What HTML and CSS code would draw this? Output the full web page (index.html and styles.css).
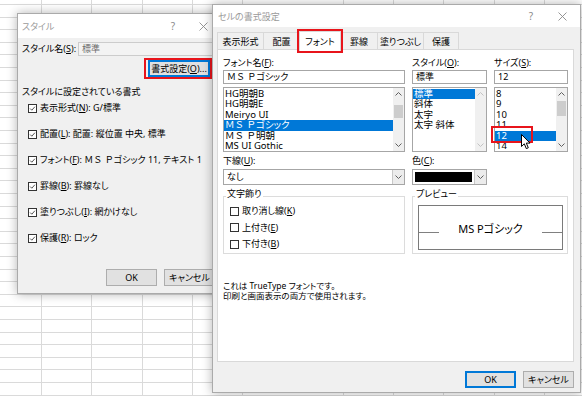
FILE: index.html
```html
<!DOCTYPE html>
<html lang="ja">
<head>
<meta charset="utf-8">
<title>スタイル</title>
<link rel="stylesheet" href="styles.css">
</head>
<body>
<section class="dlg dlg-style">
  <header class="titlebar">
    <span class="title">スタイル</span>
    <span class="help">?</span>
    <span class="close"><svg viewBox="0 0 9 9"><path d="M0.5 0.5L8.5 8.5M8.5 0.5L0.5 8.5"/></svg></span>
  </header>
  <div class="body1">
    <div class="name-row">
      <span class="name-lbl">スタイル名(<u>S</u>):</span>
      <div class="tb tb-off">標準</div>
    </div>
    <div class="mark fmt-mark"><button class="btn btn-def fmt-btn">書式設定(<u>O</u>)...</button></div>
    <div class="section">スタイルに設定されている書式</div>
    <ul class="checks">
      <li><span class="cb"><svg viewBox="0 0 9 9"><polyline points="1.5,4.6 3.6,6.7 7.6,2.2"/></svg></span><span>表示形式(<u>N</u>): G/標準</span></li>
      <li><span class="cb"><svg viewBox="0 0 9 9"><polyline points="1.5,4.6 3.6,6.7 7.6,2.2"/></svg></span><span>配置(<u>L</u>): 配置: 縦位置 中央, 標準</span></li>
      <li><span class="cb"><svg viewBox="0 0 9 9"><polyline points="1.5,4.6 3.6,6.7 7.6,2.2"/></svg></span><span>フォント(<u>F</u>): <span class="fw">ＭＳ Ｐ</span>ゴシック 11, テキスト 1</span></li>
      <li><span class="cb"><svg viewBox="0 0 9 9"><polyline points="1.5,4.6 3.6,6.7 7.6,2.2"/></svg></span><span>罫線(<u>B</u>): 罫線なし</span></li>
      <li><span class="cb"><svg viewBox="0 0 9 9"><polyline points="1.5,4.6 3.6,6.7 7.6,2.2"/></svg></span><span>塗りつぶし(<u>I</u>): 網かけなし</span></li>
      <li><span class="cb"><svg viewBox="0 0 9 9"><polyline points="1.5,4.6 3.6,6.7 7.6,2.2"/></svg></span><span>保護(<u>R</u>): ロック</span></li>
    </ul>
    <div class="btns1">
      <button class="btn">OK</button>
      <button class="btn">キャンセル</button>
    </div>
  </div>
</section>

<section class="dlg dlg-cell">
  <header class="titlebar">
    <span class="title">セルの書式設定</span>
    <span class="help">?</span>
    <span class="close"><svg viewBox="0 0 9 9"><path d="M0.5 0.5L8.5 8.5M8.5 0.5L0.5 8.5"/></svg></span>
  </header>
  <nav class="tabs">
    <span class="tab t1">表示形式</span>
    <span class="tab t2">配置</span>
    <span class="tab t3 active">フォント</span>
    <span class="tab t4">罫線</span>
    <span class="tab t5">塗りつぶし</span>
    <span class="tab t6">保護</span>
  </nav>
  <div class="panel">
    <div class="lbl">フォント名(<u>F</u>):</div>
    <div class="lbl">スタイル(<u>O</u>):</div>
    <div class="lbl">サイズ(<u>S</u>):</div>

    <div class="tb"><span class="fw">ＭＳ Ｐ</span>ゴシック</div>
    <div class="tb">標準</div>
    <div class="tb">12</div>

    <div class="list">
      <ul class="items">
        <li>HG明朝B</li>
        <li>HG明朝E</li>
        <li>Meiryo UI</li>
        <li class="sel"><span class="fw">ＭＳ Ｐ</span>ゴシック</li>
        <li><span class="fw">ＭＳ Ｐ</span>明朝</li>
        <li>MS UI Gothic</li>
      </ul>
      <div class="sb">
        <span class="arr"><svg viewBox="0 0 7 4"><polyline points="0.5,3.5 3.5,0.5 6.5,3.5"/></svg></span>
        <span class="track"><span class="thumb th-font"></span></span>
        <span class="arr"><svg viewBox="0 0 7 4"><polyline points="0.5,0.5 3.5,3.5 6.5,0.5"/></svg></span>
      </div>
    </div>
    <div class="list">
      <ul class="items">
        <li class="sel">標準</li>
        <li>斜体</li>
        <li>太字</li>
        <li>太字 斜体</li>
      </ul>
      <div class="sb sb-off">
        <span class="arr"><svg viewBox="0 0 7 4"><polyline points="0.5,3.5 3.5,0.5 6.5,3.5"/></svg></span>
        <span class="track"></span>
        <span class="arr"><svg viewBox="0 0 7 4"><polyline points="0.5,0.5 3.5,3.5 6.5,0.5"/></svg></span>
      </div>
    </div>
    <div class="list size-list">
      <ul class="items">
        <li>8</li>
        <li>9</li>
        <li>10</li>
        <li>11</li>
        <li class="sel">12</li>
        <li>14</li>
      </ul>
      <div class="sb">
        <span class="arr"><svg viewBox="0 0 7 4"><polyline points="0.5,3.5 3.5,0.5 6.5,3.5"/></svg></span>
        <span class="track"><span class="thumb th-size"></span></span>
        <span class="arr"><svg viewBox="0 0 7 4"><polyline points="0.5,0.5 3.5,3.5 6.5,0.5"/></svg></span>
      </div>
      <span class="mark size-mark"></span>
      <svg class="cursor" viewBox="0 0 10 16"><path d="M0.5 0.5L0.5 12.5L3.3 9.8L5.3 14.6L7.3 13.8L5.3 9.1L9 9.1Z"/></svg>
    </div>

    <div class="lbl">下線(<u>U</u>):</div>
    <div class="lbl span2">色(<u>C</u>):</div>

    <div class="combo">
      <span class="combo-val">なし</span>
      <span class="combo-btn"><svg viewBox="0 0 7 4"><polyline points="0.5,0.5 3.5,3.5 6.5,0.5"/></svg></span>
    </div>
    <div class="combo color-combo">
      <span class="swatch"></span>
      <span class="combo-btn"><svg viewBox="0 0 7 4"><polyline points="0.5,0.5 3.5,3.5 6.5,0.5"/></svg></span>
    </div>
    <div class="spacer"></div>

    <div class="group">
      <div class="glabel">文字飾り</div>
      <ul class="gchecks">
        <li><span class="cb cb-off"></span><span>取り消し線(<u>K</u>)</span></li>
        <li><span class="cb cb-off"></span><span>上付き(<u>E</u>)</span></li>
        <li><span class="cb cb-off"></span><span>下付き(<u>B</u>)</span></li>
      </ul>
    </div>
    <div class="group span2">
      <div class="glabel">プレビュー</div>
      <div class="preview">
        <span class="pline"></span>
        <span class="ptext">MS Pゴシック</span>
        <span class="pline"></span>
      </div>
    </div>

    <p class="desc">これは TrueType フォントです。<br>印刷と画面表示の両方で使用されます。</p>
  </div>
  <footer class="btns2">
    <button class="btn btn-def">OK</button>
    <button class="btn">キャンセル</button>
  </footer>
</section>
</body>
</html>
```

FILE: styles.css
```css
* { box-sizing: border-box; margin: 0; padding: 0; }

html, body { width: 582px; height: 396px; overflow: hidden; }

body {
  position: relative;
  font-family: "Noto Sans", "Noto Sans CJK JP", sans-serif;
  font-size: 9px;
  color: #000;
  font-feature-settings: "palt";
  background:
    repeating-linear-gradient(to right, transparent 0 41px, #dadada 41px 42px, transparent 42px 50.3px),
    repeating-linear-gradient(to bottom, transparent 0 4px, #dadada 4px 5px, transparent 5px 12.6px),
    #fff;
}

ul { list-style: none; }
u { text-decoration-thickness: 1px; text-underline-offset: 1px; }
.fw { font-feature-settings: normal; }

/* ---------- dialogs (windows on the desktop) ---------- */
.dlg {
  position: absolute;
  display: flex;
  flex-direction: column;
  background: #f0f0f0;
  border: 1px solid #aaaaaa;
  box-shadow: 0 0 10px rgba(0, 0, 0, 0.3);
}
.dlg-style { left: 17px; top: 13px; width: 206px; height: 281px; }
.dlg-cell  { left: 212px; top: 4px; width: 369px; height: 389px; }

.titlebar {
  flex: none;
  display: flex;
  align-items: center;
  background: #fff;
  color: #9a9a9a;
}
.dlg-style .titlebar { height: 24px; padding: 0 4px 0 4px; }
.dlg-cell .titlebar { height: 22px; padding: 0 3px 0 5px; }
.title { flex: 1; font-size: 9px; }
.help { width: 30px; text-align: center; font-size: 10px; color: #8a8a8a; }
.dlg-cell .help { width: 32px; }
.close { width: 30px; display: flex; justify-content: center; }
.close svg { width: 9px; height: 9px; fill: none; stroke: #8a8a8a; stroke-width: 0.9; }

/* ---------- buttons ---------- */
.btn {
  width: 51px;
  height: 17px;
  font: inherit;
  font-size: 9px;
  color: #000;
  background: #e1e1e1;
  border: 1px solid #adadad;
  line-height: 15px;
  padding: 0;
}
.btn-def { border: 1px solid #0078d7; box-shadow: inset 0 0 0 1px #0078d7; }

.mark { border: 2px solid #e8141b; }

/* ---------- text boxes ---------- */
.tb {
  height: 14px;
  border: 1px solid #a6a6a6;
  background: #fff;
  padding-left: 3px;
  line-height: 12px;
  white-space: nowrap;
  overflow: hidden;
}
.tb-off { background: #f3f3f3; border-color: #cccccc; color: #6d6d6d; }

/* ---------- checkboxes ---------- */
.cb {
  flex: none;
  width: 9px;
  height: 9px;
  border: 1px solid #333;
  background: #fff;
  display: flex;
  align-items: center;
  justify-content: center;
}
.cb svg { width: 9px; height: 9px; fill: none; stroke: #222; stroke-width: 1; }
.cb-off { border-color: #333; }

/* ---------- style dialog body ---------- */
.body1 {
  flex: 1;
  display: flex;
  flex-direction: column;
  padding-left: 4px;
}
.name-row { display: flex; align-items: center; margin-top: 4px; height: 14px; }
.name-lbl { width: 56px; flex: none; line-height: 12px; white-space: nowrap; }
.name-row .tb { flex: 1; }

.fmt-mark {
  align-self: flex-start;
  margin: 2px 0 0 122px;
  width: 68px;
  height: 21px;
  padding: 0 0 0 2px;
  display: flex;
  align-items: center;
}
.fmt-btn { width: 62px; height: 17px; white-space: nowrap; }

.section { margin-top: 7px; line-height: 12px; }

.checks {
  margin: 4px 0 0 6px;
  display: flex;
  flex-direction: column;
  gap: 14px;
}
.checks li, .gchecks li {
  display: flex;
  align-items: center;
  gap: 3px;
  height: 12px;
  line-height: 12px;
  white-space: nowrap;
}

.btns1 { display: flex; gap: 7px; margin: 25px 0 0 84px; }

/* ---------- cell format dialog ---------- */
.tabs {
  flex: none;
  display: flex;
  align-items: flex-end;
  height: 20px;
  margin-top: 2px;
  padding-left: 4px;
}
.tab {
  height: 17px;
  border: 1px solid #d9d9d9;
  border-bottom: none;
  margin-right: -1px;
  background: #f0f0f0;
  display: flex;
  align-items: center;
  justify-content: center;
  white-space: nowrap;
}
.t1 { width: 47px; }
.t2 { width: 37px; }
.t3 { width: 42px; }
.t4 { width: 38px; }
.t5 { width: 47px; }
.t6 { width: 36px; }
.tab.active {
  position: relative;
  z-index: 1;
  height: 20px;
  margin-bottom: -2px;
  background: #fff;
  outline: 2px solid #e8141b;
}

.panel {
  flex: none;
  height: 313px;
  margin: 0 6px 0 4px;
  background: #fff;
  border: 1px solid #d9d9d9;
  padding: 7px 0 0 5px;
  display: grid;
  grid-template-columns: 182px 75px 74px;
  grid-template-rows: 12px 15px 68px 15px 18px 69px auto;
  column-gap: 7px;
  align-items: end;
  align-content: start;
}
.lbl { line-height: 12px; height: 12px; white-space: nowrap; }
.span2 { grid-column: span 2; }

.list {
  position: relative;
  height: 65px;
  border: 1px solid #a6a6a6;
  background: #fff;
  display: flex;
}
.items { flex: 1; overflow: hidden; padding-top: 0.5px; font-size: 9.5px; }
.items li {
  height: 10.5px;
  line-height: 10.5px;
  padding-left: 1px;
  white-space: nowrap;
}
.items li.sel { background: #0078d7; color: #fff; }

.sb {
  flex: none;
  width: 11px;
  background: #f0f0f0;
  display: flex;
  flex-direction: column;
}
.arr { height: 12px; display: flex; align-items: center; justify-content: center; flex: none; }
.arr svg { width: 7px; height: 4px; fill: none; stroke: #606060; stroke-width: 1; }
.sb-off .arr svg { stroke: #c2c2c2; }
.track { flex: 1; display: flex; flex-direction: column; align-items: center; }
.thumb { width: 9px; background: #cdcdcd; }
.th-font { margin-top: 5px; height: 13px; }
.th-size { margin-top: 1px; height: 15px; }

.size-mark {
  position: absolute;
  left: -4px;
  top: 38px;
  width: 42px;
  height: 17px;
}
.cursor {
  position: absolute;
  left: 26px;
  top: 46px;
  width: 10px;
  height: 16px;
  fill: #fff;
  stroke: #000;
  stroke-width: 1;
  stroke-linejoin: miter;
}

.combo {
  height: 16px;
  border: 1px solid #a6a6a6;
  background: #fff;
  display: flex;
  align-items: stretch;
}
.combo-val { flex: 1; line-height: 14px; padding-left: 3px; }
.combo-btn {
  width: 12px;
  flex: none;
  background: #ececec;
  border-left: 1px solid #c8c8c8;
  display: flex;
  align-items: center;
  justify-content: center;
}
.combo-btn svg { width: 7px; height: 4px; fill: none; stroke: #606060; stroke-width: 1; }
.color-combo { padding: 2px 0 2px 2px; }
.color-combo .combo-btn { margin: -2px 0; }
.swatch { flex: 1; background: #000; margin-right: 2px; }

.group {
  height: 58px;
  border: 1px solid #dcdcdc;
  display: flex;
  flex-direction: column;
}
.glabel {
  align-self: flex-start;
  margin: -9px 0 0 2px;
  padding: 0 1px;
  background: #fff;
  line-height: 12px;
  height: 12px;
}
.gchecks {
  margin: 5px 0 0 6px;
  display: flex;
  flex-direction: column;
  gap: 4.5px;
}

.preview {
  margin: 5px 4px 0 5px;
  height: 45px;
  border: 1px solid #7a7a7a;
  display: flex;
  align-items: center;
}
.pline { width: 20px; height: 1px; background: #808080; margin-top: 9px; flex: none; }
.ptext { flex: 1; text-align: center; font-size: 11px; }

.desc {
  grid-column: 1 / -1;
  align-self: start;
  margin-top: 27px;
  line-height: 10px;
  font-size: 8.5px;
}

.btns2 {
  display: flex;
  justify-content: flex-end;
  gap: 7px;
  margin: 9px 6px 0 0;
}
```
